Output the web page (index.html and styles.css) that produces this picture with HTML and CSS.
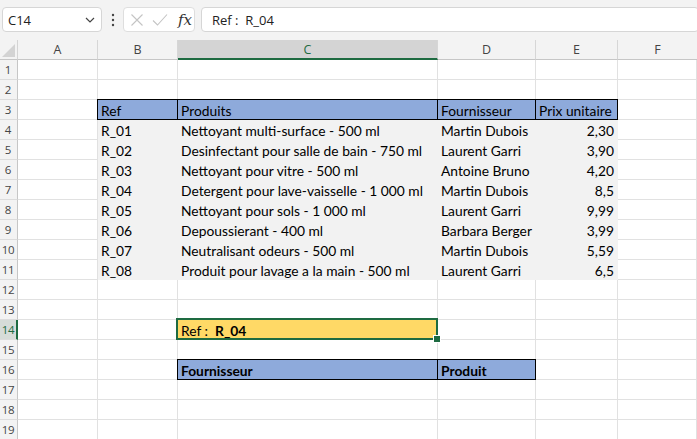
FILE: index.html
```html
<!DOCTYPE html>
<html lang="fr">
<head>
<meta charset="utf-8">
<title>Classeur</title>
<link rel="stylesheet" href="styles.css">
</head>
<body>
<div class="fbar">
  <div class="namebox">
    <span class="nb-text">C14</span>
    <svg class="chev" width="10" height="6" viewBox="0 0 10 6"><path d="M1 1 L5 5 L9 1" fill="none" stroke="#444" stroke-width="1.2"/></svg>
  </div>
  <svg class="dots" width="4" height="14" viewBox="0 0 4 14"><circle cx="2" cy="2" r="1.2" fill="#444"/><circle cx="2" cy="7" r="1.2" fill="#444"/><circle cx="2" cy="12" r="1.2" fill="#444"/></svg>
  <div class="fxbox">
    <svg width="14" height="14" viewBox="0 0 14 14"><path d="M1.5 1.5 L12.5 12.5 M12.5 1.5 L1.5 12.5" stroke="#c4c4c4" stroke-width="1.1" fill="none"/></svg>
    <svg width="16" height="14" viewBox="0 0 16 14"><path d="M1 7.5 L5.5 12 L15 1.5" stroke="#c4c4c4" stroke-width="1.1" fill="none"/></svg>
    <span class="fx">fx</span>
  </div>
  <div class="formula">Ref :&nbsp; R_04</div>
</div>

<div class="sheet">
  <div class="corner"><span class="tri"></span></div>
  <div class="ch">A</div><div class="ch">B</div><div class="ch ch-sel">C</div><div class="ch">D</div><div class="ch">E</div><div class="ch ch-last">F</div>

  <div class="rh">1</div><div class="c"></div><div class="c"></div><div class="c"></div><div class="c"></div><div class="c"></div><div class="c"></div>
  <div class="rh">2</div><div class="c"></div><div class="c"></div><div class="c"></div><div class="c"></div><div class="c"></div><div class="c"></div>
  <div class="rh">3</div><div class="c"></div><div class="c hd">Ref</div><div class="c hd">Produits</div><div class="c hd">Fournisseur</div><div class="c hd">Prix unitaire</div><div class="c"></div>
  <div class="rh">4</div><div class="c"></div><div class="c fill">R_01</div><div class="c fill">Nettoyant multi-surface - 500 ml</div><div class="c fill">Martin Dubois</div><div class="c fill num">2,30</div><div class="c"></div>
  <div class="rh">5</div><div class="c"></div><div class="c fill">R_02</div><div class="c fill">Desinfectant pour salle de bain - 750 ml</div><div class="c fill">Laurent Garri</div><div class="c fill num">3,90</div><div class="c"></div>
  <div class="rh">6</div><div class="c"></div><div class="c fill">R_03</div><div class="c fill">Nettoyant pour vitre - 500 ml</div><div class="c fill">Antoine Bruno</div><div class="c fill num">4,20</div><div class="c"></div>
  <div class="rh">7</div><div class="c"></div><div class="c fill">R_04</div><div class="c fill">Detergent pour lave-vaisselle - 1 000 ml</div><div class="c fill">Martin Dubois</div><div class="c fill num">8,5</div><div class="c"></div>
  <div class="rh">8</div><div class="c"></div><div class="c fill">R_05</div><div class="c fill">Nettoyant pour sols - 1 000 ml</div><div class="c fill">Laurent Garri</div><div class="c fill num">9,99</div><div class="c"></div>
  <div class="rh">9</div><div class="c"></div><div class="c fill">R_06</div><div class="c fill">Depoussierant - 400 ml</div><div class="c fill">Barbara Berger</div><div class="c fill num">3,99</div><div class="c"></div>
  <div class="rh">10</div><div class="c"></div><div class="c fill">R_07</div><div class="c fill">Neutralisant odeurs - 500 ml</div><div class="c fill">Martin Dubois</div><div class="c fill num">5,59</div><div class="c"></div>
  <div class="rh">11</div><div class="c"></div><div class="c fill">R_08</div><div class="c fill">Produit pour lavage a la main - 500 ml</div><div class="c fill">Laurent Garri</div><div class="c fill num">6,5</div><div class="c"></div>
  <div class="rh">12</div><div class="c"></div><div class="c"></div><div class="c"></div><div class="c"></div><div class="c"></div><div class="c"></div>
  <div class="rh">13</div><div class="c"></div><div class="c"></div><div class="c"></div><div class="c"></div><div class="c"></div><div class="c"></div>
  <div class="rh rh-sel">14</div><div class="c"></div><div class="c"></div><div class="c sel">Ref :&nbsp;&nbsp;<b>R_04</b></div><div class="c"></div><div class="c"></div><div class="c"></div>
  <div class="rh">15</div><div class="c"></div><div class="c"></div><div class="c"></div><div class="c"></div><div class="c"></div><div class="c"></div>
  <div class="rh">16</div><div class="c"></div><div class="c"></div><div class="c hd bold">Fournisseur</div><div class="c hd bold">Produit</div><div class="c"></div><div class="c"></div>
  <div class="rh">17</div><div class="c"></div><div class="c"></div><div class="c"></div><div class="c"></div><div class="c"></div><div class="c"></div>
  <div class="rh">18</div><div class="c"></div><div class="c"></div><div class="c"></div><div class="c"></div><div class="c"></div><div class="c"></div>
  <div class="rh">19</div><div class="c"></div><div class="c"></div><div class="c"></div><div class="c"></div><div class="c"></div><div class="c"></div>
</div>
</body>
</html>
```

FILE: styles.css
```css
* { box-sizing: border-box; }
html, body { margin: 0; padding: 0; background: #ffffff; overflow: hidden; }
body { font-family: "Open Sans", "Noto Sans", sans-serif; color: #000; }

.fbar {
  height: 40px;
  background: #f3f3f3;
  display: flex;
  align-items: flex-start;
  padding: 7px 0 0 2px;
}
.namebox {
  width: 100px;
  height: 25px;
  background: #fff;
  border: 1px solid #d6d6d6;
  border-radius: 4px;
  display: flex;
  align-items: center;
  justify-content: space-between;
  padding: 0 6px 0 5px;
  font-size: 13px;
  color: #222;
}
.chev { margin-top: 1px; }
.dots { margin: 6px 8px 0 9px; }
.fxbox {
  width: 72px;
  height: 25px;
  background: #fff;
  border: 1px solid #dedede;
  border-radius: 4px;
  display: flex;
  align-items: center;
  gap: 8px;
  padding: 0 0 0 6px;
}
.fx {
  font-family: "DejaVu Serif", "Liberation Serif", serif;
  font-style: italic;
  font-size: 15px;
  color: #333;
  margin-left: 2px;
}
.formula {
  flex: 1;
  margin-left: 6px;
  margin-right: -2px;
  height: 25px;
  background: #fff;
  border: 1px solid #d6d6d6;
  border-radius: 4px;
  display: flex;
  align-items: center;
  padding-left: 10px;
  font-size: 13px;
  color: #222;
}

.sheet {
  display: grid;
  grid-template-columns: 18px 80px 80px 260px 98px 82px 1fr;
  grid-auto-rows: 20px;
  font-family: "Lato", "Open Sans", sans-serif;
  font-size: 13.8px;
}
.corner {
  background: #f3f3f3;
  border-right: 1px solid #d4d4d4;
  border-bottom: 1px solid #c6c6c6;
  position: relative;
}
.tri {
  position: absolute;
  right: 2px;
  bottom: 2px;
  width: 0;
  height: 0;
  border-left: 13px solid transparent;
  border-bottom: 13px solid #d3d3d3;
}
.ch {
  background: #f3f3f3;
  border-right: 1px solid #d6d6d6;
  border-bottom: 1px solid #c6c6c6;
  display: flex;
  align-items: center;
  justify-content: center;
  font-family: "Open Sans", sans-serif;
  font-size: 12.5px;
  color: #444;
}
.ch-sel {
  background: #d4d4d4;
  border-bottom: 2px solid #1e6b41;
  color: #1e6b41;
}
.ch-last { border-right: none; }
.rh {
  background: #f3f3f3;
  border-right: 1px solid #c6c6c6;
  border-bottom: 1px solid #dcdcdc;
  display: flex;
  align-items: center;
  justify-content: center;
  padding-right: 1px;
  font-family: "Open Sans", sans-serif;
  font-size: 11.5px;
  letter-spacing: -0.3px;
  color: #444;
}
.rh-sel {
  background: #d6dcd8;
  border-right: 2px solid #1e6b41;
  padding-right: 0;
  color: #1e6b41;
}
.c {
  border-right: 1px solid #e1e1e1;
  border-bottom: 1px solid #e1e1e1;
  display: flex;
  align-items: center;
  padding: 1px 3px 0 3px;
  white-space: nowrap;
  overflow: visible;
}
.fill {
  background: #f2f2f2;
  border-color: #f2f2f2;
}
.num { justify-content: flex-end; }
.hd {
  background: #8eaadb;
  border-right: 1px solid #000;
  border-bottom: 1px solid #000;
  box-shadow: 0 -1px 0 #000, -1px 0 0 #000, -1px -1px 0 #000;
}
.bold { font-weight: 700; }
.sel {
  background: #ffd966;
  border-color: #ffd966;
  position: relative;
}
.sel::after {
  content: "";
  position: absolute;
  left: -2px;
  top: -2px;
  right: -1px;
  bottom: -1px;
  border: 2px solid #1e6b41;
}
.sel::before {
  content: "";
  position: absolute;
  right: -4px;
  bottom: -4px;
  width: 6px;
  height: 6px;
  background: #1e6b41;
  border: 1px solid #fff;
  z-index: 2;
}
```
